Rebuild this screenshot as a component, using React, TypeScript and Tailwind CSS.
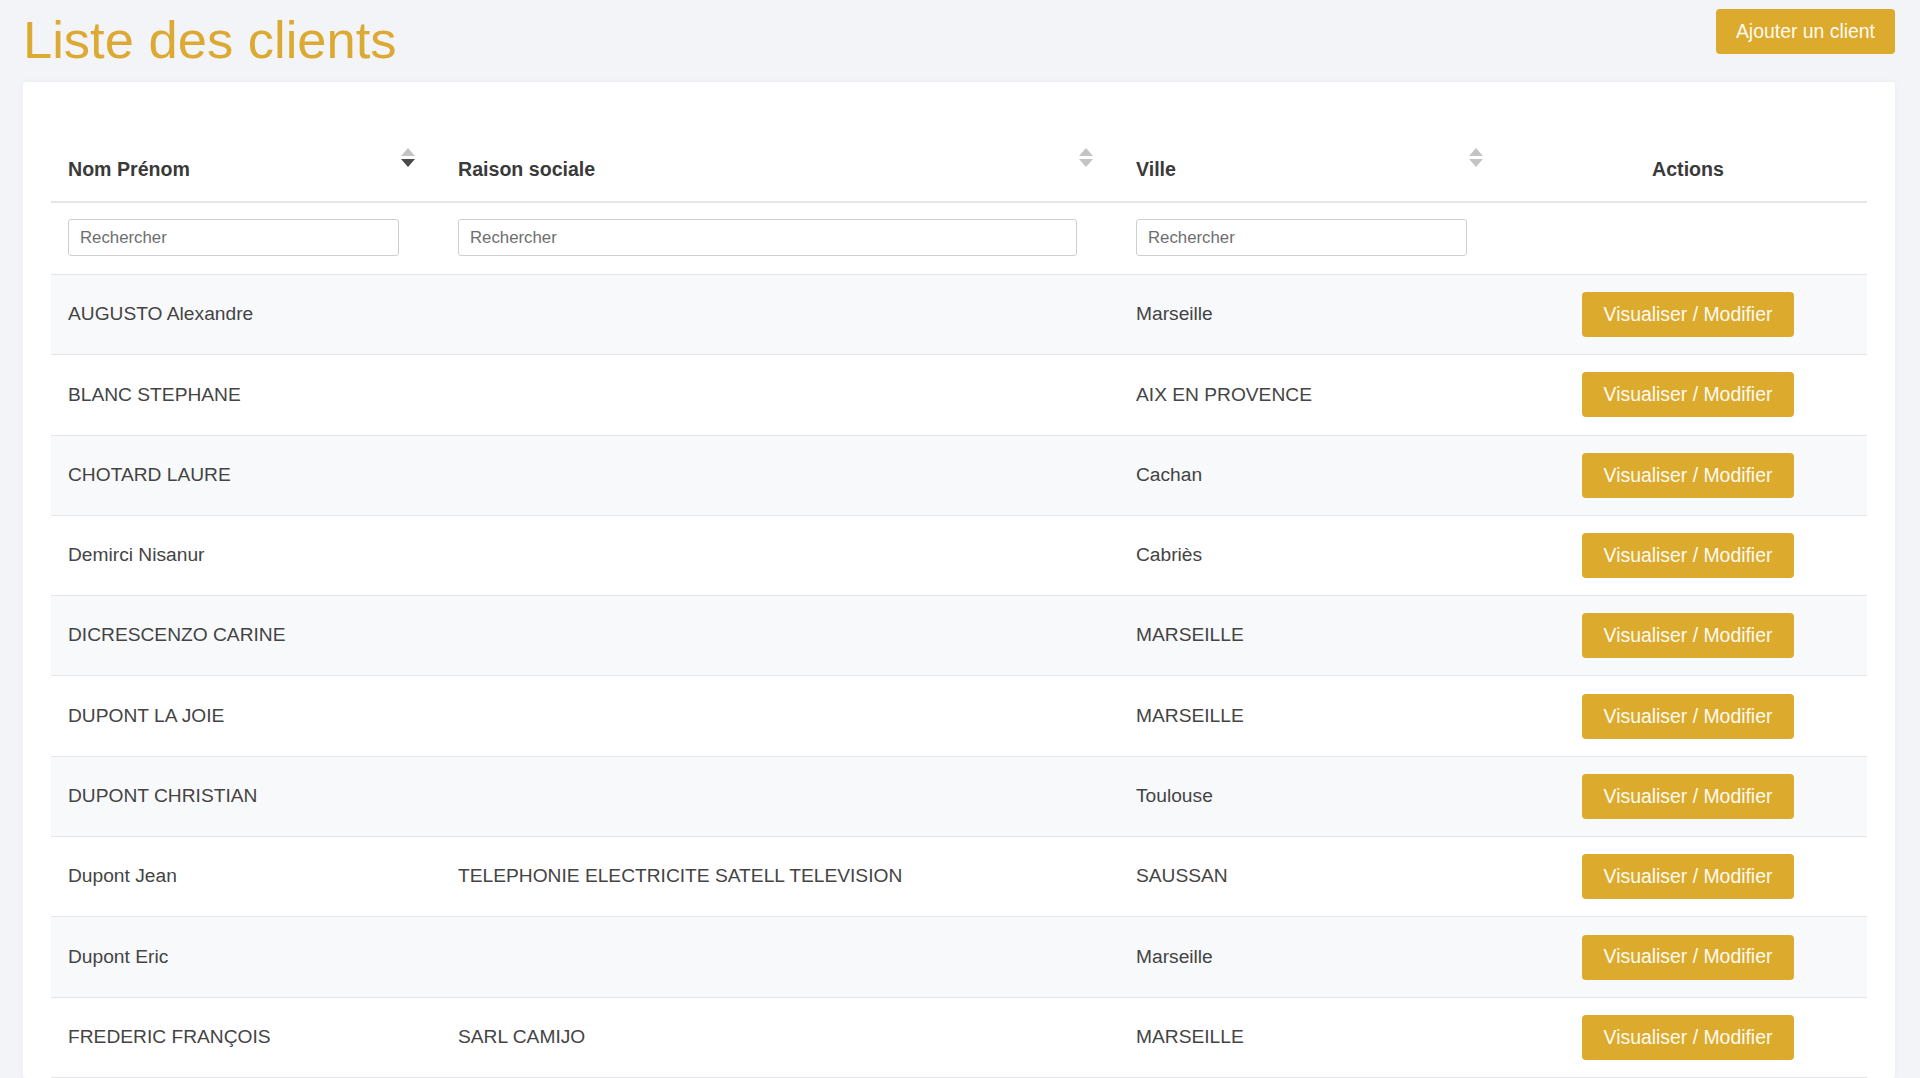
import React from "react";

const rows: { nom: string; raison: string; ville: string }[] = [
  { nom: "AUGUSTO Alexandre", raison: "", ville: "Marseille" },
  { nom: "BLANC STEPHANE", raison: "", ville: "AIX EN PROVENCE" },
  { nom: "CHOTARD LAURE", raison: "", ville: "Cachan" },
  { nom: "Demirci Nisanur", raison: "", ville: "Cabriès" },
  { nom: "DICRESCENZO CARINE", raison: "", ville: "MARSEILLE" },
  { nom: "DUPONT LA JOIE", raison: "", ville: "MARSEILLE" },
  { nom: "DUPONT CHRISTIAN", raison: "", ville: "Toulouse" },
  { nom: "Dupont Jean", raison: "TELEPHONIE ELECTRICITE SATELL TELEVISION", ville: "SAUSSAN" },
  { nom: "Dupont Eric", raison: "", ville: "Marseille" },
  { nom: "FREDERIC FRANÇOIS", raison: "SARL CAMIJO", ville: "MARSEILLE" },
];

function SortIcon({ active }: { active?: boolean }) {
  return (
    <svg width="16" height="19" viewBox="0 0 16 19" className="absolute right-[25px] top-[38px]">
      <path d="M8 0 L15 8 L1 8 Z" fill="#c4c4c4" />
      <path d="M1 11 L15 11 L8 19 Z" fill={active ? "#4a4a4a" : "#c4c4c4"} />
    </svg>
  );
}

const grid = "grid grid-cols-[390px_678px_390px_358px]";

export default function App() {
  return (
    <div
      className="min-h-screen bg-[#f3f4f8] pl-[23px] pr-[25px] text-[19.2px] text-[#444]"
      style={{ fontFamily: '"Liberation Sans", Arial, Helvetica, sans-serif' }}
    >
      <div className="flex h-[82px] items-start justify-between">
        <h1 className="mt-[10px] text-[52.5px] leading-[60px] font-normal text-[#dcaa32]">Liste des clients</h1>
        <button className="mt-[9px] h-[45px] rounded-[4px] bg-[#dcaa2c] px-[20px] text-[19.4px] text-[#fffaf0]">
          Ajouter un client
        </button>
      </div>
      <div className="rounded-[3px] bg-white px-[28px] pt-[28px] shadow-[0_0_6px_rgba(0,0,0,0.04)]">
        <div className={`${grid} h-[93px] border-b-2 border-[#e3e5e8] text-[19.6px] font-bold text-[#3a3a3a]`}>
          <div className="relative flex items-end pb-[17px] pl-[17px]">
            Nom Prénom
            <SortIcon active />
          </div>
          <div className="relative flex items-end pb-[17px] pl-[17px]">
            Raison sociale
            <SortIcon />
          </div>
          <div className="relative flex items-end pb-[17px] pl-[17px]">
            Ville
            <SortIcon />
          </div>
          <div className="flex items-end justify-center pb-[17px]">Actions</div>
        </div>
        <div className={`${grid} h-[72px] items-start border-b border-[#e3e5e8] pt-[16px]`}>
          {[0, 1, 2].map((i) => (
            <div key={i} className="pl-[17px] pr-[42px]">
              <input
                placeholder="Rechercher"
                className="h-[37px] w-full rounded-[3px] border border-[#cfcfcf] bg-white px-[11px] text-[16.8px] text-[#444] placeholder:text-[#6e6e6e] outline-none"
              />
            </div>
          ))}
          <div />
        </div>
        {rows.map((r, i) => (
          <div
            key={i}
            className={`${grid} h-[80.3px] items-center border-b border-[#e3e5e8] ${i % 2 === 0 ? "bg-[#f8f9fb]" : "bg-white"}`}
          >
            <div className="pl-[17px]">{r.nom}</div>
            <div className="pl-[17px]">{r.raison}</div>
            <div className="pl-[17px]">{r.ville}</div>
            <div className="flex justify-center">
              <button className="h-[45px] w-[212px] rounded-[4px] bg-[#dcaa2c] text-[19.4px] text-[#fffaf0]">
                Visualiser / Modifier
              </button>
            </div>
          </div>
        ))}
      </div>
    </div>
  );
}
